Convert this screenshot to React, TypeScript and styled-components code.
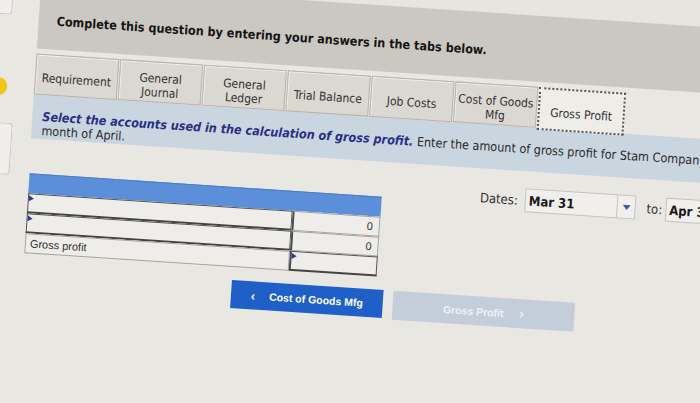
import React from 'react';
import styled, { createGlobalStyle } from 'styled-components';

const GlobalStyle = createGlobalStyle`
  html, body {
    margin: 0;
    padding: 0;
    background: #e7e5e0;
    overflow: hidden;
  }
`;

// whole sheet is tilted a little, like the photo of the screen
const Page = styled.div`
  width: 790px;
  height: 470px;
  margin-top: -20px;
  display: flex;
  background: #e9e7e2;
  transform: rotate(3.8deg);
  transform-origin: 0 20px;
  font-family: "DejaVu Sans Condensed", "DejaVu Sans", Verdana, sans-serif;
  color: #222;
`;

// LEFT STRIP
const Sidebar = styled.div`
  width: 40px;
  flex-shrink: 0;
  display: flex;
  flex-direction: column;
`;
const SideCard = styled.div<{ $w: number; $h: number; $top: number }>`
  width: ${p => p.$w}px;
  height: ${p => p.$h}px;
  margin-top: ${p => p.$top}px;
  box-sizing: border-box;
  background: #efeeea;
  border: 1px solid #c9c7c1;
  border-left: none;
  border-radius: 0 4px 4px 0;
`;
const Dot = styled.div`
  width: 18px;
  height: 18px;
  margin: 63px 0 0 -5px;
  border-radius: 50%;
  background: #f1c618;
`;

// MAIN
const Main = styled.div`
  flex: 1;
  display: flex;
  flex-direction: column;
`;
const HeaderBand = styled.div`
  height: 66px;
  box-sizing: border-box;
  padding: 30px 0 0 18px;
  background: #cbc8c1;
`;
const Title = styled.div`
  font-size: 12.5px;
  font-weight: bold;
  line-height: 16px;
  color: #151515;
`;

const TabRow = styled.div`
  margin-top: 5px;
  height: 41px;
  display: flex;
  gap: 1px;
  align-items: flex-start;
`;
const Tab = styled.div<{ $active?: boolean }>`
  position: relative;
  z-index: ${p => (p.$active ? 1 : 0)};
  width: ${p => (p.$active ? 87 : 83)}px;
  height: ${p => (p.$active ? 43 : 41)}px;
  box-sizing: border-box;
  padding-top: 6px;
  display: flex;
  align-items: center;
  justify-content: center;
  text-align: center;
  font-size: 12px;
  line-height: 14px;
  color: #333;
  background: ${p => (p.$active ? '#eeede8' : '#dbd8d1')};
  border: ${p => (p.$active ? '2px dotted #555' : '1px solid #b7b4ad')};
  box-shadow: ${p => (p.$active ? 'none' : 'inset 1px 1px 0 #f0eee9')};
`;

const InfoBand = styled.div`
  height: 44px;
  box-sizing: border-box;
  padding: 15px 0 0 10px;
  background: #c9d6e0;
  font-size: 12.5px;
  line-height: 14px;
  color: #2a2a2a;
  white-space: nowrap;
`;
const Strong = styled.span`
  font-weight: bold;
  font-style: italic;
  color: #2b2e85;
`;

const Section = styled.div`
  display: flex;
  align-items: flex-start;
`;

// TABLE
const Table = styled.div`
  margin: 35px 0 0 1px;
  display: grid;
  grid-template-columns: 265px 88px;
  grid-auto-rows: 20px;
  font-family: "Liberation Sans", Arial, sans-serif;
  font-size: 11px;
  color: #333;
`;
const HeadRow = styled.div`
  grid-column: 1 / -1;
  background: #5b8fda;
  border-top: 1px solid #4f7dc0;
`;
const Cell = styled.div<{ $input?: boolean; $num?: boolean }>`
  position: relative;
  box-sizing: border-box;
  display: flex;
  align-items: center;
  justify-content: ${p => (p.$num ? 'flex-end' : 'flex-start')};
  padding: 0 6px 0 4px;
  background: #eeede9;
  border: 1px solid ${p => (p.$input ? '#555' : '#a5a39e')};
  border-bottom: ${p => (p.$input ? '2px solid #444' : '1px solid #a5a39e')};
  border-left: ${p => (p.$num ? '2px solid #4a4a4a' : undefined)};
`;
const Marker = styled.span`
  position: absolute;
  left: 0;
  top: 1px;
  width: 0;
  height: 0;
  border-top: 3px solid transparent;
  border-bottom: 3px solid transparent;
  border-left: 5px solid #2c3d91;
`;

// DATES
const Dates = styled.div`
  margin: 17px 0 0 98px;
  display: flex;
  align-items: center;
  font-size: 13px;
  color: #333;
`;
const DateBox = styled.div<{ $w: number }>`
  width: ${p => p.$w}px;
  height: 24px;
  box-sizing: border-box;
  display: flex;
  align-items: stretch;
  background: #f0efeb;
  border: 1px solid #c6c3bd;
  font-weight: bold;
  color: #1a1a1a;
`;
const DateText = styled.div`
  flex: 1;
  display: flex;
  align-items: center;
  padding-left: 3px;
`;
const DropPart = styled.div`
  width: 17px;
  border-left: 1px solid #c6c3bd;
  display: flex;
  align-items: center;
  justify-content: center;
`;
const Arrow = styled.span`
  width: 0;
  height: 0;
  border-left: 4px solid transparent;
  border-right: 4px solid transparent;
  border-top: 5px solid #3a5cab;
`;
const Label = styled.span<{ $gap: number; $before?: number }>`
  margin-right: ${p => p.$gap}px;
  margin-left: ${p => p.$before ?? 0}px;
`;

// BUTTONS
const ButtonRow = styled.div`
  margin: 13px 0 0 210px;
  display: flex;
  gap: 10px;
  align-items: flex-start;
`;
const NavButton = styled.div<{ $disabled?: boolean }>`
  width: ${p => (p.$disabled ? 182 : 152)}px;
  height: ${p => (p.$disabled ? 29 : 28)}px;
  display: flex;
  align-items: center;
  justify-content: center;
  gap: ${p => (p.$disabled ? 16 : 14)}px;
  background: ${p => (p.$disabled ? '#c4cedb' : '#1f5fc8')};
  color: ${p => (p.$disabled ? '#eef2f7' : '#fff')};
  font-family: "Liberation Sans", Arial, sans-serif;
  font-size: 10.5px;
  font-weight: bold;
`;
const Chevron = styled.span`
  font-size: 13px;
  font-weight: bold;
`;

const tabs = [
  ['Requirement'],
  ['General', 'Journal'],
  ['General', 'Ledger'],
  ['Trial Balance'],
  ['Job Costs'],
  ['Cost of Goods', 'Mfg'],
  ['Gross Profit'],
];

export default function App(): JSX.Element {
  return (
    <>
      <GlobalStyle />
      <Page>
        <Sidebar>
          <SideCard $w={13} $h={34} $top={0} />
          <Dot />
          <SideCard $w={21} $h={52} $top={27} />
        </Sidebar>

        <Main>
          <HeaderBand>
            <Title>Complete this question by entering your answers in the tabs below.</Title>
          </HeaderBand>

          <TabRow>
            {tabs.map((t, i) => (
              <Tab key={i} $active={i === tabs.length - 1}>
                <div>
                  {t.map((line, j) => (
                    <div key={j}>{line}</div>
                  ))}
                </div>
              </Tab>
            ))}
          </TabRow>

          <InfoBand>
            <div>
              <Strong>Select the accounts used in the calculation of gross profit.</Strong> Enter the amount
              of gross profit for Stam Company for the
            </div>
            <div>month of April.</div>
          </InfoBand>

          <Section>
            <Table>
              <HeadRow />
              <Cell $input><Marker /></Cell>
              <Cell $num>0</Cell>
              <Cell $input><Marker /></Cell>
              <Cell $num>0</Cell>
              <Cell>Gross profit</Cell>
              <Cell $num $input><Marker /></Cell>
            </Table>

            <Dates>
              <Label $gap={7}>Dates:</Label>
              <DateBox $w={111}>
                <DateText>Mar 31</DateText>
                <DropPart><Arrow /></DropPart>
              </DateBox>
              <Label $gap={3} $before={11}>to:</Label>
              <DateBox $w={111}>
                <DateText>Apr 30</DateText>
                <DropPart><Arrow /></DropPart>
              </DateBox>
            </Dates>
          </Section>

          <ButtonRow>
            <NavButton>
              <Chevron>&lsaquo;</Chevron>
              <span>Cost of Goods Mfg</span>
            </NavButton>
            <NavButton $disabled>
              <span>Gross Profit</span>
              <Chevron>&rsaquo;</Chevron>
            </NavButton>
          </ButtonRow>
        </Main>
      </Page>
    </>
  );
}
